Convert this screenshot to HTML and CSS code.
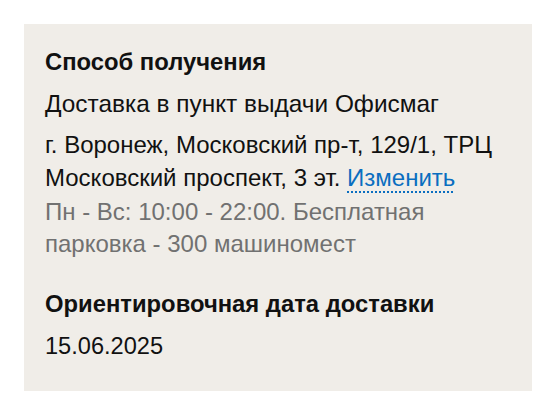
FILE: index.html
```html
<!DOCTYPE html>
<html lang="ru">
<head>
<meta charset="utf-8">
<link rel="stylesheet" href="styles.css">
</head>
<body>
<div class="card">
  <section class="block">
    <h2 class="title">Способ получения</h2>
    <p class="line">Доставка в пункт выдачи Офисмаг</p>
    <p class="address">г. Воронеж, Московский пр-т, 129/1, ТРЦ Московский проспект, 3 эт. <a class="change" href="#">Изменить</a></p>
    <p class="hint">Пн - Вс: 10:00 - 22:00. Бесплатная парковка - 300 машиномест</p>
  </section>
  <section class="block block-date">
    <h2 class="title">Ориентировочная дата доставки</h2>
    <p class="line line-date">15.06.2025</p>
  </section>
</div>
</body>
</html>
```

FILE: styles.css
```css
html, body {
  margin: 0;
  padding: 0;
  background: #ffffff;
}
body {
  padding: 24px 24px 0 24px;
  font-family: "Liberation Sans", Arial, sans-serif;
  color: #111111;
}
.card {
  background: #f0ede8;
  width: 466px;
  padding: 26px 21px 29px 21px;
}
.title {
  margin: 0;
  font-size: 23.8px;
  font-weight: bold;
  line-height: 24px;
}
.line {
  margin: 14px 0 0 0;
  font-size: 24.4px;
  line-height: 32px;
}
.address {
  margin: 8px 0 0 0;
  font-size: 24px;
  line-height: 33px;
}
.change {
  color: #0a6ec0;
  text-decoration: underline dotted #0a6ec0;
  text-decoration-thickness: 2px;
  text-underline-offset: 5px;
}
.hint {
  margin: 2px 0 0 0;
  font-size: 24px;
  line-height: 32px;
  color: #717171;
}
.block-date {
  margin-top: 32px;
}
.line-date {
  margin-top: 14px;
  font-size: 23.6px;
}
```
